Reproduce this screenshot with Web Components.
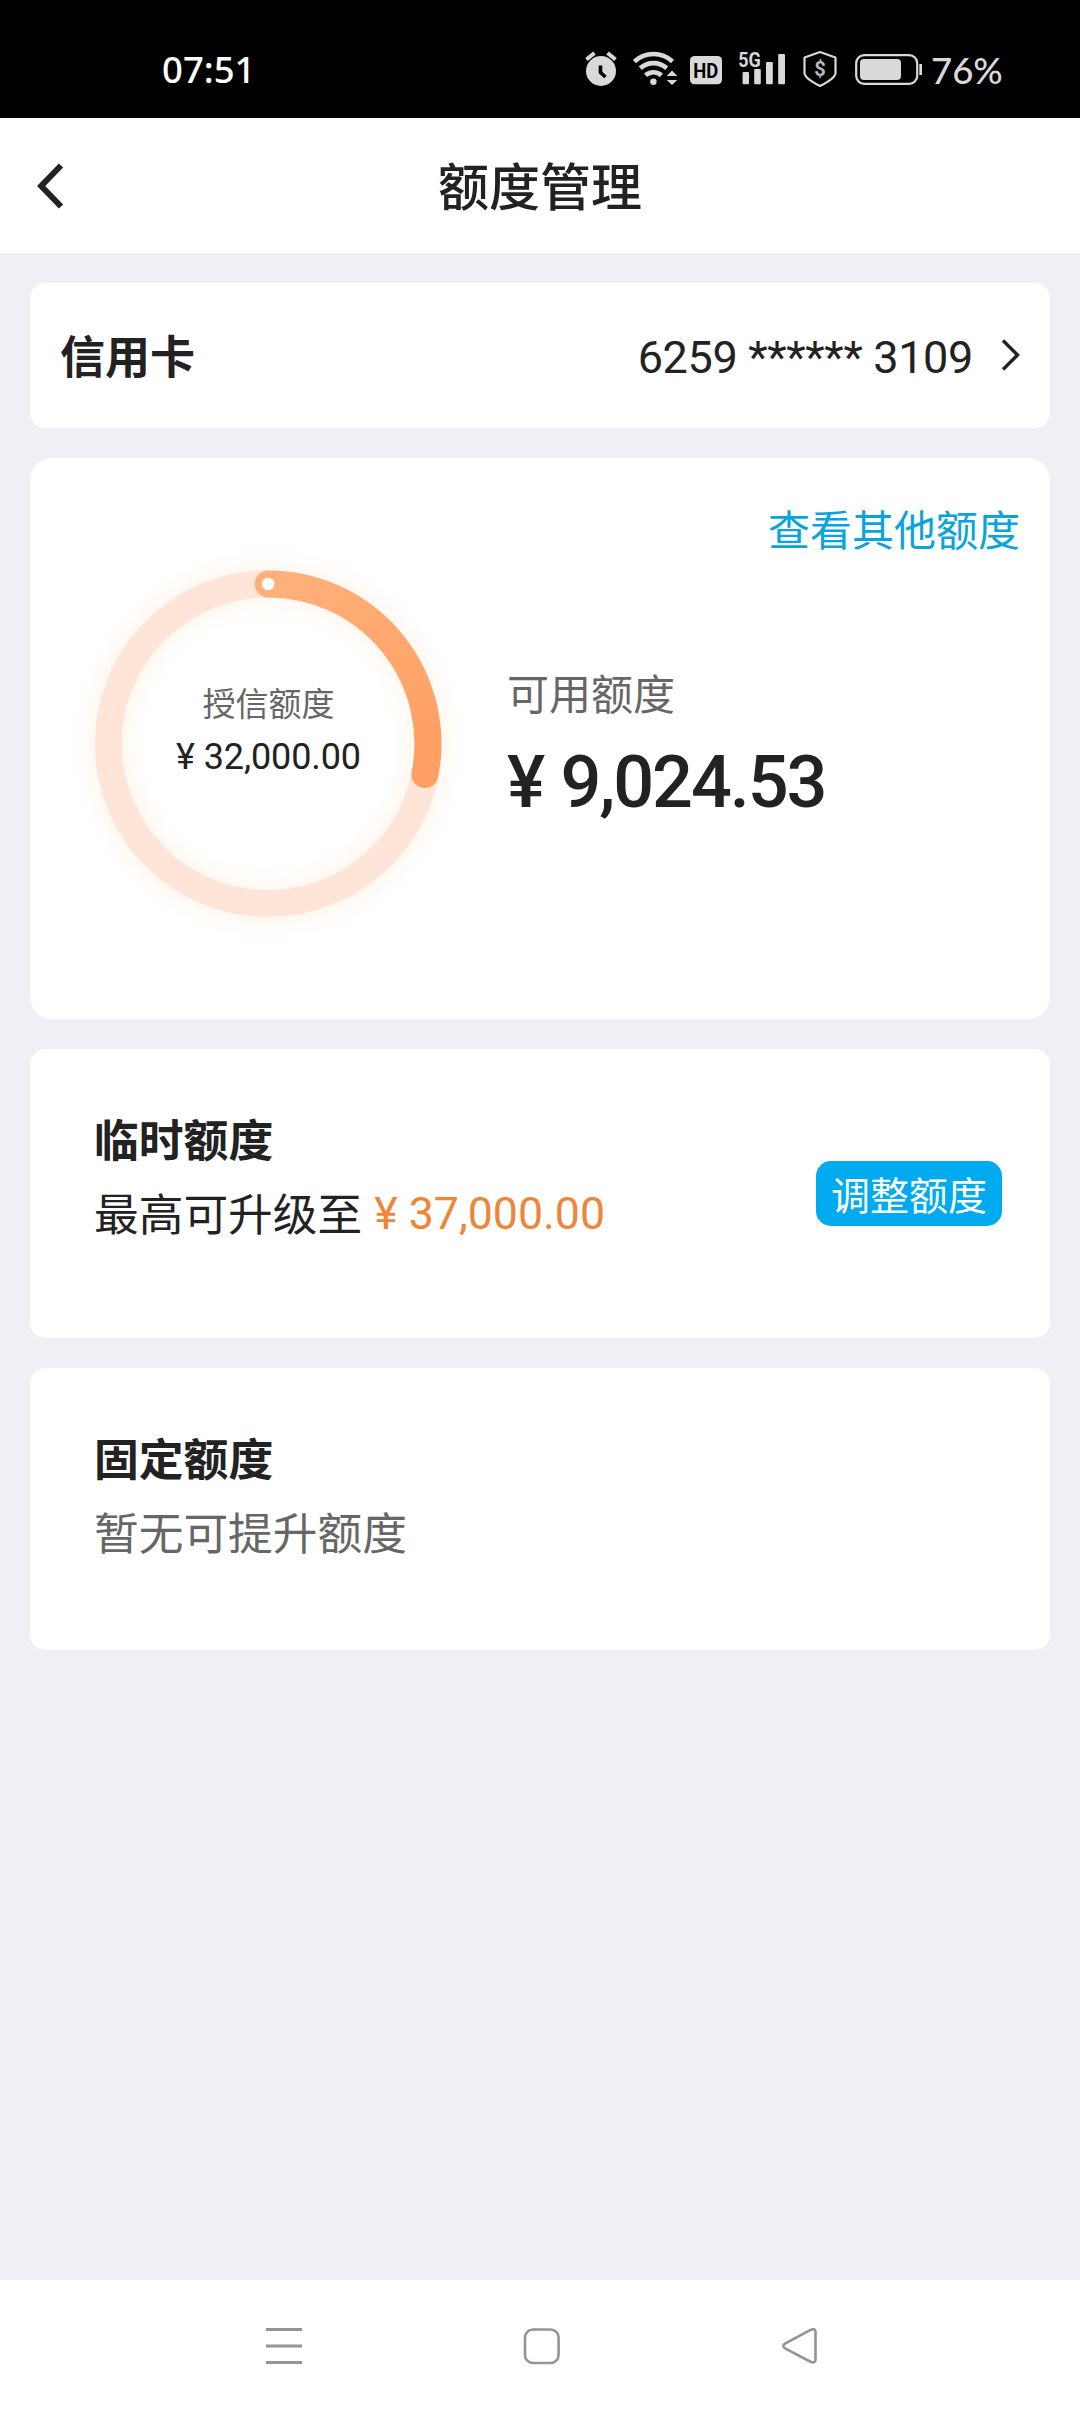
<!DOCTYPE html>
<html lang="zh-CN">
<head>
<meta charset="utf-8">
<title>额度管理</title>
<style>
html,body{margin:0;padding:0}
body{background:#efeff5;color:#222;font-family:"Noto Sans CJK SC",sans-serif}
</style>
</head>
<body>
<quota-app></quota-app>
<script>
const define = (name, html) => {
  const t = document.createElement('template');
  t.innerHTML = html;
  customElements.define(name, class extends HTMLElement {
    constructor() {
      super();
      this.attachShadow({ mode: 'open' }).appendChild(t.content.cloneNode(true));
    }
  });
};

define('status-bar', `
<style>
:host{display:flex;box-sizing:border-box;height:118px;padding:48px 0 0 162px;background:#000;color:#fff}
.time{font:500 36.500px/42px "Noto Sans",sans-serif;width:423px}
svg{display:block;height:42px;flex:none;fill:#d9d9d9}
svg text{font-family:Roboto,sans-serif;font-weight:700}
.pct{font:500 36.500px/42px Lato,sans-serif;color:#d9d9d9;margin:1px 0 0 7px}
</style>
<span class="time">07:51</span>
<svg width="48" viewBox="585 48 48 42">
  <circle cx="601" cy="71" r="15"/>
  <path d="M586.5 59.5l8-6.5M615.5 59.5l-8-6.5" stroke="#d9d9d9" stroke-width="4"/>
  <path d="M600.5 65.500v7l5 4.500" fill="none" stroke="#000" stroke-width="3.6"/>
</svg>
<svg width="57" viewBox="633 48 57 42">
  <circle cx="653.4" cy="81.700" r="3.200"/>
  <g fill="none" stroke="#d9d9d9" stroke-width="4.600">
    <path d="M634.500 61.500a28 28 0 0 1 38 0"/>
    <path d="M640.300 68.300a19.500 19.500 0 0 1 26.400 0"/>
    <path d="M645.600 75.400a11.500 11.500 0 0 1 15.800 0"/>
  </g>
  <path d="M672 70.500l5.200 5.500h-10.400zM672 85l5.200-5h-10.400z"/>
</svg>
<svg width="49" viewBox="690 48 49 42">
  <rect x="690" y="56" width="32" height="28.300" rx="4.500"/>
  <text x="693.300" y="77.800" font-size="20.500" textLength="25" lengthAdjust="spacingAndGlyphs" style="fill:#000">HD</text>
</svg>
<svg width="64" viewBox="738 48 64 42" style="margin-left:-1px;margin-right:1px">
  <rect x="742.600" y="72" width="6.400" height="12.200" rx="1"/>
  <rect x="754.200" y="69" width="6.600" height="15.200" rx="1"/>
  <rect x="766" y="62" width="6.800" height="22.200" rx="1.200"/>
  <rect x="778.200" y="54" width="6.800" height="30.200" rx="1.200"/>
  <text x="738.200" y="66.600" font-size="20" textLength="22.500" lengthAdjust="spacingAndGlyphs">5G</text>
</svg>
<svg width="52" viewBox="803 48 52 42">
  <path d="M820 52l15.500 5.500v15.500c0 5-9.500 10-15.500 13c-6-3-15.500-8-15.500-13v-15.500z" fill="none" stroke="#d9d9d9" stroke-width="2.200" stroke-linejoin="round"/>
  <text x="820" y="76" font-size="20" text-anchor="middle" style="fill:#b8b8b8">$</text>
</svg>
<svg width="69" viewBox="855 48 69 42">
  <rect x="856.200" y="55.200" width="61" height="28.600" rx="8" fill="none" stroke="#d9d9d9" stroke-width="2.200"/>
  <rect x="860" y="59" width="41" height="21" rx="4"/>
  <rect x="919.300" y="64" width="2.700" height="11"/>
</svg>
<span class="pct">76%</span>
`);

define('page-header', `
<style>
:host{display:grid;grid-template-columns:100px 1fr 100px;align-items:center;height:135px;background:#fff}
svg{display:block;margin-left:36px}
h1{margin:0 0 3px;text-align:center;font-size:51px;font-weight:500;line-height:70px}
</style>
<svg width="28" height="46" viewBox="36 163 28 46" fill="none" stroke="#222" stroke-width="6"><path d="M61 165.500L41.200 186L61 206.500"/></svg>
<h1><slot></slot></h1>
`);

define('white-card', `
<style>
:host{display:block;box-sizing:border-box;background:#fff;border-radius:var(--radius,15px)}
</style><slot></slot>
`);

define('card-picker', `
<style>
:host{display:flex;align-items:center;height:145px;padding:0 29px 0 30px}
.label{font-size:45px;font-weight:700;line-height:66px;flex:1;margin-bottom:2px}
.num{font:400 45px/54px Roboto,sans-serif;letter-spacing:-.350px;margin:4px 28px 0 0}
svg{display:block;margin-bottom:1px}
</style>
<span class="label"><slot></slot></span>
<span class="num"><slot name="number"></slot></span>
<svg width="20" height="34" viewBox="0 0 20 34" fill="none" stroke="#222" stroke-width="3.400"><path d="M2 2.500L16.500 17L2 31.500"/></svg>
`);

define('quota-ring', `
<style>
:host{display:grid;width:420px;height:420px}
svg,.text{grid-area:1/1}
.text{display:flex;flex-direction:column;align-items:center;padding:137px 3px 0 0}
.cap{font-size:33px;line-height:50px;color:#666}
.amt{font:400 36px/44px Roboto,sans-serif;letter-spacing:-.100px;margin-top:8px}
</style>
<svg width="420" height="420" viewBox="60 540 420 420" fill="none">
  <defs>
    <filter id="glow" x="-20%" y="-20%" width="140%" height="140%"><feGaussianBlur stdDeviation="11"/></filter>
    <linearGradient id="arc" gradientUnits="userSpaceOnUse" x1="268" y1="584" x2="426" y2="775"><stop offset="0" stop-color="#ffb07a"/><stop offset="1" stop-color="#ff9f63"/></linearGradient>
  </defs>
  <circle cx="268.200" cy="743.700" r="160" stroke="#fff6ee" stroke-width="42" filter="url(#glow)"/>
  <circle cx="268.200" cy="743.700" r="159.800" stroke="#ffe5d7" stroke-width="27"/>
  <path d="M268.200 583.900A159.800 159.800 0 0 1 424.900 774.500" stroke="url(#arc)" stroke-width="27" stroke-linecap="round"/>
  <circle cx="268.200" cy="584" r="6.200" fill="#fff"/>
</svg>
<div class="text"><span class="cap"><slot></slot></span><span class="amt"><slot name="amount"></slot></span></div>
`);

define('quota-overview', `
<style>
:host{display:flex;flex-direction:column;height:561px}
.link{align-self:flex-end;margin:40px 30px 0 0;font-size:42px;line-height:60px;color:#0ba3dc}
.row{display:flex;margin:-18px 0 0 30px}
.avail{display:flex;flex-direction:column;padding:122px 0 0 27px}
.cap{font-size:42px;line-height:60px;color:#666}
.amt{font:500 72px/84px Roboto,sans-serif;letter-spacing:-2.100px;word-spacing:1.500px;margin-top:19px}
</style>
<span class="link"><slot name="link"></slot></span>
<div class="row">
  <quota-ring><slot name="credit-label"></slot><slot name="credit" slot="amount"></slot></quota-ring>
  <div class="avail"><span class="cap"><slot name="available-label"></slot></span><span class="amt"><slot name="available"></slot></span></div>
</div>
`);

define('quota-line', `
<style>
:host{display:flex;justify-content:space-between;box-sizing:border-box;height:var(--h);padding:55px 48px 0 64px}
.t{font-size:44.800px;font-weight:700;line-height:68px}
.d{display:flex;align-items:flex-start;gap:12px;font-size:44.700px;line-height:68px;margin-top:6px;color:var(--desc,#222)}
::slotted([slot=amount]){font-family:Roboto,sans-serif;color:#ee8539;padding-top:2px}
</style>
<div><div class="t"><slot name="title"></slot></div><div class="d"><slot></slot><slot name="amount"></slot></div></div>
<slot name="action"></slot>
`);

define('pill-button', `
<style>
:host{display:block;box-sizing:border-box;height:65px;margin-top:57px;padding:0 15px;border-radius:15px;background:#00aaef;color:#fff;font-size:39px;line-height:65px}
</style><slot></slot>
`);

define('nav-bar', `
<style>
:host{display:flex;height:132px;background:#fff;padding:48px 0 0 265px;box-sizing:border-box;gap:220px}
svg{display:block;fill:none;stroke:#949494;stroke-width:2.600}
</style>
<svg width="38" height="38" viewBox="265 2328 38 38"><path d="M266 2329.500h36M266 2346h36M266 2362.500h36" stroke-width="3"/></svg>
<svg width="38" height="38" viewBox="523 2328 38 38"><rect x="525" y="2329.500" width="33.600" height="33.500" rx="8"/></svg>
<svg width="38" height="38" viewBox="781 2328 38 38"><path d="M811 2329.700L785 2343.700Q781.600 2346 785 2348.300L811 2362Q815.500 2363.500 815.500 2359.500V2332Q815.500 2328 811 2329.700Z"/></svg>
`);

define('quota-app', `
<style>
:host{display:flex;flex-direction:column;width:1080px;height:2412px;background:#efeff5;overflow:hidden}
main{flex:1;display:flex;flex-direction:column;gap:30px;padding:30px 30px 0}
</style>
<status-bar></status-bar>
<page-header>额度管理</page-header>
<main>
  <white-card><card-picker>信用卡<span slot="number">6259 ****** 3109</span></card-picker></white-card>
  <white-card style="--radius:22px"><quota-overview>
    <span slot="link">查看其他额度</span>
    <span slot="credit-label">授信额度</span><span slot="credit">¥ 32,000.00</span>
    <span slot="available-label">可用额度</span><span slot="available">¥ 9,024.53</span>
  </quota-overview></white-card>
  <white-card><quota-line style="--h:289px"><span slot="title">临时额度</span><span>最高可升级至</span><span slot="amount" style="display:block">¥ 37,000.00</span><pill-button slot="action">调整额度</pill-button></quota-line></white-card>
  <white-card><quota-line style="--h:282px;--desc:#666"><span slot="title">固定额度</span><span>暂无可提升额度</span></quota-line></white-card>
</main>
<nav-bar></nav-bar>
`);
</script>
</body>
</html>
